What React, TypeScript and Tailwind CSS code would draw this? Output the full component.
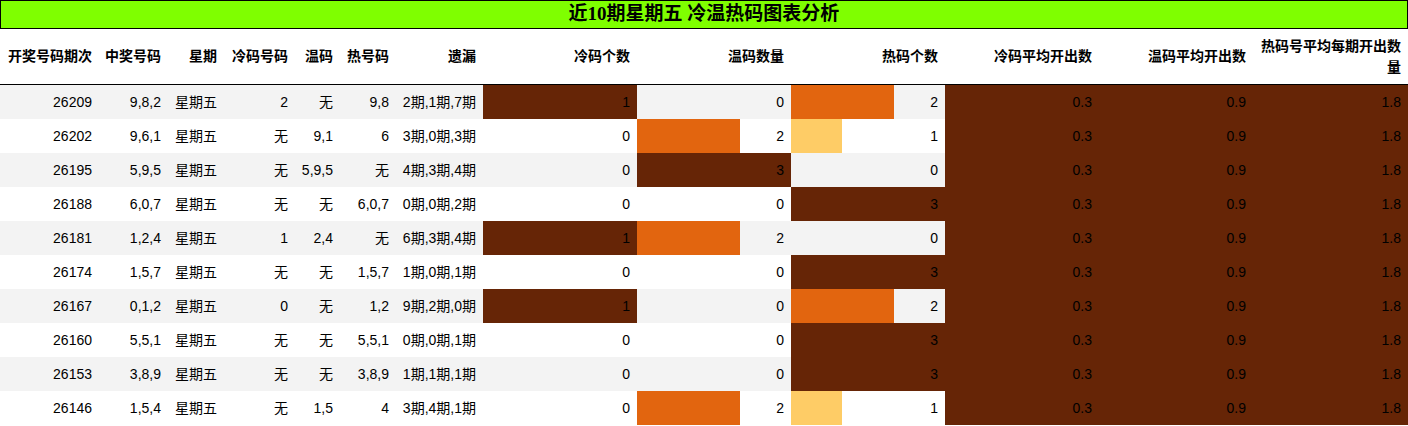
import React from "react";

type Row = {
  issue: string;
  nums: string;
  day: string;
  cold: string;
  warm: string;
  hot: string;
  miss: string;
  coldN: number;
  warmN: number;
  hotN: number;
};

const ROWS: Row[] = [
  { issue: "26209", nums: "9,8,2", day: "星期五", cold: "2", warm: "无", hot: "9,8", miss: "2期,1期,7期", coldN: 1, warmN: 0, hotN: 2 },
  { issue: "26202", nums: "9,6,1", day: "星期五", cold: "无", warm: "9,1", hot: "6", miss: "3期,0期,3期", coldN: 0, warmN: 2, hotN: 1 },
  { issue: "26195", nums: "5,9,5", day: "星期五", cold: "无", warm: "5,9,5", hot: "无", miss: "4期,3期,4期", coldN: 0, warmN: 3, hotN: 0 },
  { issue: "26188", nums: "6,0,7", day: "星期五", cold: "无", warm: "无", hot: "6,0,7", miss: "0期,0期,2期", coldN: 0, warmN: 0, hotN: 3 },
  { issue: "26181", nums: "1,2,4", day: "星期五", cold: "1", warm: "2,4", hot: "无", miss: "6期,3期,4期", coldN: 1, warmN: 2, hotN: 0 },
  { issue: "26174", nums: "1,5,7", day: "星期五", cold: "无", warm: "无", hot: "1,5,7", miss: "1期,0期,1期", coldN: 0, warmN: 0, hotN: 3 },
  { issue: "26167", nums: "0,1,2", day: "星期五", cold: "0", warm: "无", hot: "1,2", miss: "9期,2期,0期", coldN: 1, warmN: 0, hotN: 2 },
  { issue: "26160", nums: "5,5,1", day: "星期五", cold: "无", warm: "无", hot: "5,5,1", miss: "0期,0期,1期", coldN: 0, warmN: 0, hotN: 3 },
  { issue: "26153", nums: "3,8,9", day: "星期五", cold: "无", warm: "无", hot: "3,8,9", miss: "1期,1期,1期", coldN: 0, warmN: 0, hotN: 3 },
  { issue: "26146", nums: "1,5,4", day: "星期五", cold: "无", warm: "1,5", hot: "4", miss: "3期,4期,1期", coldN: 0, warmN: 2, hotN: 1 },
];

const HEADERS = [
  "开奖号码期次",
  "中奖号码",
  "星期",
  "冷码号码",
  "温码",
  "热号码",
  "遗漏",
  "冷码个数",
  "温码数量",
  "热码个数",
  "冷码平均开出数",
  "温码平均开出数",
  "热码号平均每期开出数量",
];

const GRID =
  "grid grid-cols-[99px_69px_56px_71px_45px_56px_87px_154px_154px_154px_154px_154px_155px]";

// colour by share of the column maximum
function barColor(ratio: number) {
  if (ratio > 0.9) return "#662506";
  if (ratio > 0.5) return "#e2650f";
  return "#fecc66";
}

function Cell({ children }: { children: React.ReactNode }) {
  return <div className="flex items-center justify-end px-[7px] h-[34px] whitespace-nowrap">{children}</div>;
}

function BarCell({ value, max, label }: { value: number; max: number; label: string }) {
  const ratio = max ? value / max : 0;
  return (
    <div className="relative flex items-center justify-end px-[7px] h-[34px]">
      {ratio > 0 && (
        <div
          className="absolute left-0 top-0 bottom-0"
          style={{ width: `${ratio * 100}%`, background: barColor(ratio) }}
        />
      )}
      <span className="relative">{label}</span>
    </div>
  );
}

export default function App() {
  const coldMax = Math.max(...ROWS.map((r) => r.coldN));
  const warmMax = Math.max(...ROWS.map((r) => r.warmN));
  const hotMax = Math.max(...ROWS.map((r) => r.hotN));

  return (
    <div
      className="w-[1408px] h-[426px] bg-white text-black text-[14px] overflow-hidden"
      style={{ fontFamily: '"Liberation Sans", "Noto Sans CJK SC", sans-serif' }}
    >
      <div
        className="h-[29px] border border-black bg-[#7fff00] flex items-center justify-center text-[19px] font-bold text-black"
        style={{ fontFamily: '"Liberation Serif", "Noto Sans CJK SC", serif' }}
      >
        近10期星期五 冷温热码图表分析
      </div>

      <div className={`${GRID} h-[56px] border-b border-black font-bold text-black`}>
        {HEADERS.map((h, i) => (
          <div
            key={h}
            className={`flex items-center justify-end text-right px-[7px] leading-[21px] ${
              i === HEADERS.length - 1 ? "" : "whitespace-nowrap"
            }`}
          >
            {h}
          </div>
        ))}
      </div>

      {ROWS.map((r, i) => (
        <div key={r.issue} className={`${GRID} ${i % 2 === 0 ? "bg-[#f3f3f3]" : "bg-white"}`}>
          <Cell>{r.issue}</Cell>
          <Cell>{r.nums}</Cell>
          <Cell>{r.day}</Cell>
          <Cell>{r.cold}</Cell>
          <Cell>{r.warm}</Cell>
          <Cell>{r.hot}</Cell>
          <Cell>{r.miss}</Cell>
          <BarCell value={r.coldN} max={coldMax} label={String(r.coldN)} />
          <BarCell value={r.warmN} max={warmMax} label={String(r.warmN)} />
          <BarCell value={r.hotN} max={hotMax} label={String(r.hotN)} />
          <BarCell value={1} max={1} label="0.3" />
          <BarCell value={1} max={1} label="0.9" />
          <BarCell value={1} max={1} label="1.8" />
        </div>
      ))}
    </div>
  );
}
